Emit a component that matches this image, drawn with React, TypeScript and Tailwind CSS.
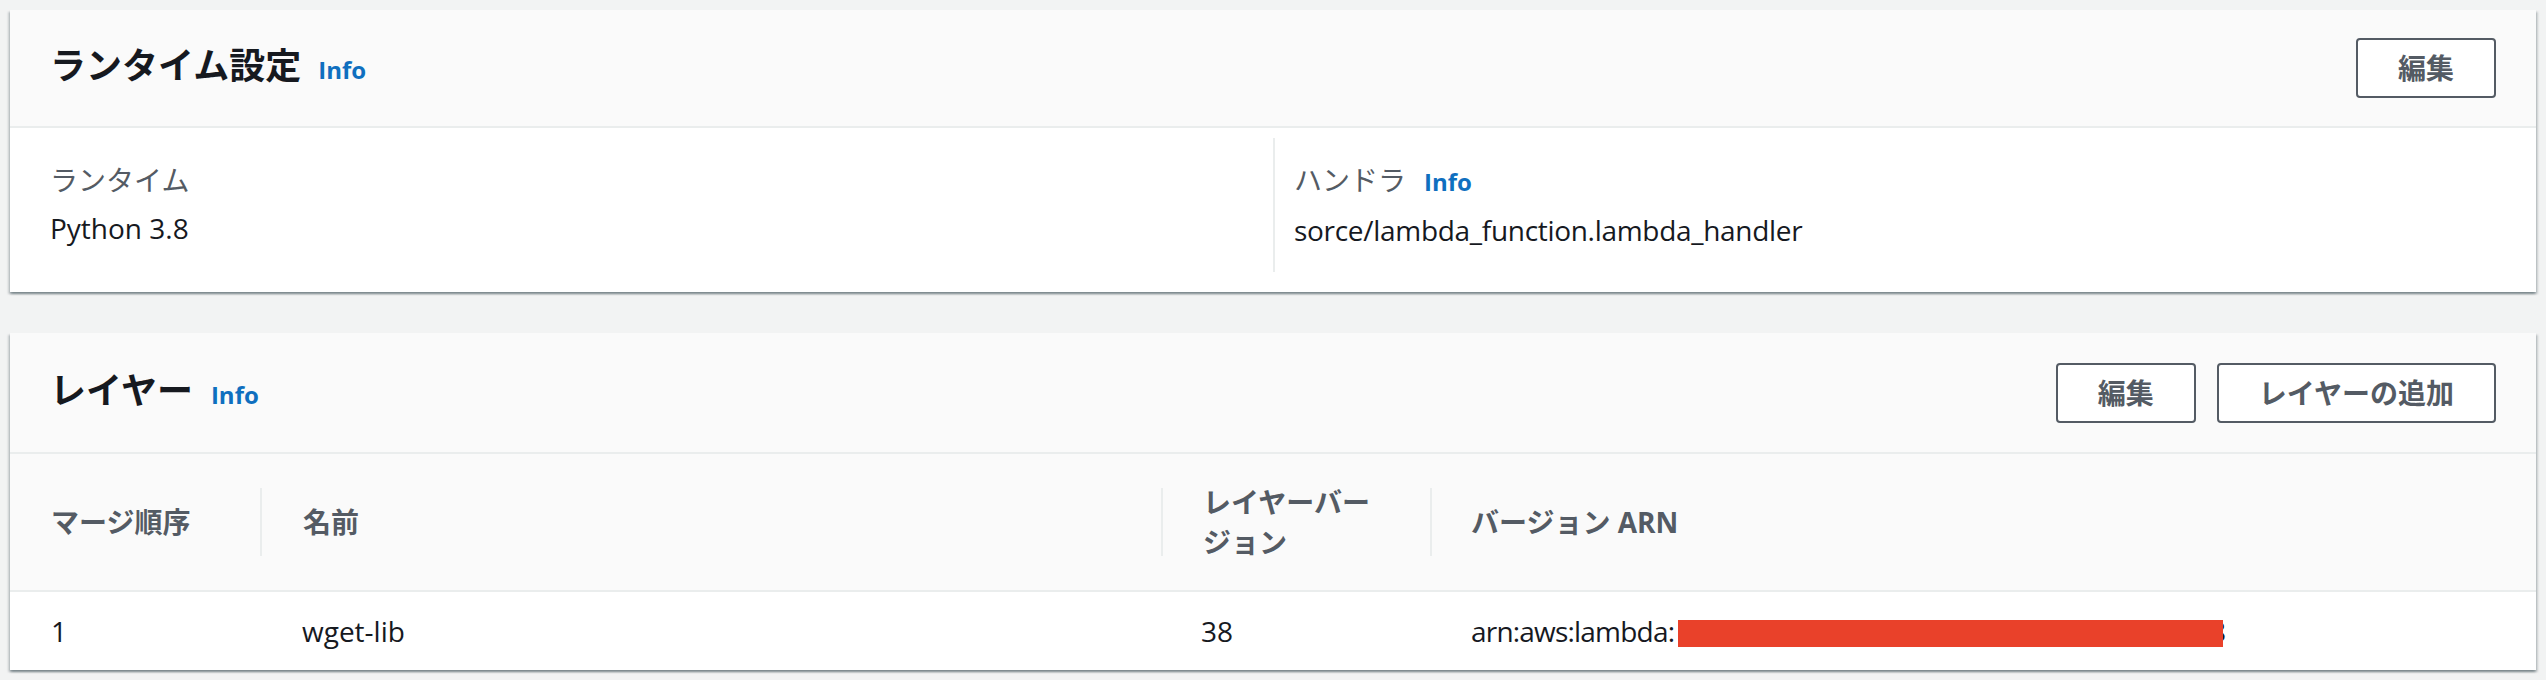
// Lambda console: runtime settings + layers panels
const font = "font-['Open_Sans','Noto_Sans_CJK_JP',sans-serif]";

const cardShadow =
  "shadow-[0_2px_2px_0_rgba(0,28,36,0.3),2px_2px_2px_0_rgba(0,28,36,0.15),-2px_2px_2px_0_rgba(0,28,36,0.15)]";

function Info({ className = "" }: { className?: string }) {
  return (
    <a href="#" className={`text-[24px] font-bold text-[#0f6fbf] no-underline ${className}`}>
      Info
    </a>
  );
}

function Button({ children }: { children: React.ReactNode }) {
  return (
    <button className="h-[60px] px-10 bg-white border-2 border-[#545b64] rounded-[4px] text-[28px] font-bold text-[#545b64] leading-none">
      {children}
    </button>
  );
}

function HeadCell({ children, sep, pad }: { children: React.ReactNode; sep: boolean; pad: string }) {
  return (
    <div className="flex items-center h-full">
      {sep && <div className="w-[2px] h-[68px] bg-[#eaeded] shrink-0" />}
      <div className={`${pad} pr-10 font-bold text-[28px] leading-[40px] text-[#545b64]`}>{children}</div>
    </div>
  );
}

export default function App() {
  return (
    <div className={`w-[2546px] h-[680px] overflow-hidden bg-[#f2f3f3] px-[10px] pt-[10px] ${font}`}>
      {/* runtime settings */}
      <section className={`bg-white ${cardShadow}`}>
        <div className="h-[118px] bg-[#fafafa] border-b-2 border-[#eaeded] px-10 flex items-center justify-between">
          <div className="flex items-baseline">
            <h2 className="text-[36px] font-bold text-[#16191f] leading-none">ランタイム設定</h2>
            <Info className="ml-[17px]" />
          </div>
          <Button>編集</Button>
        </div>
        <div className="grid grid-cols-2 px-10 pt-[10px] pb-5">
          <div className="py-5">
            <div className="text-[28px] leading-[44px] text-[#545b64] mb-1">ランタイム</div>
            <div className="text-[28px] leading-[44px] text-[#16191f]">Python 3.8</div>
          </div>
          <div className="py-5 pl-[19px] border-l-2 border-[#eaeded]">
            <div className="flex items-baseline text-[28px] leading-[44px] text-[#545b64] mb-1">
              ハンドラ
              <Info className="ml-[18px]" />
            </div>
            <div className="text-[28px] leading-[44px] text-[#16191f] tracking-[-0.3px]">
              sorce/lambda_function.lambda_handler
            </div>
          </div>
        </div>
      </section>

      {/* layers */}
      <section className={`mt-[41px] bg-white ${cardShadow}`}>
        <div className="h-[121px] bg-[#fafafa] border-b-2 border-[#eaeded] px-10 flex items-center justify-between">
          <div className="flex items-baseline">
            <h2 className="text-[36px] font-bold text-[#16191f] leading-none">レイヤー</h2>
            <Info className="ml-[18px]" />
          </div>
          <div className="flex gap-[21px]">
            <Button>編集</Button>
            <Button>レイヤーの追加</Button>
          </div>
        </div>

        <div className="grid grid-cols-[250px_901px_269px_1fr] h-[138px] bg-[#fafafa] border-b-2 border-[#eaeded]">
          <HeadCell sep={false} pad="pl-[41px]">マージ順序</HeadCell>
          <HeadCell sep pad="pl-[41px]">名前</HeadCell>
          <HeadCell sep pad="pl-10">レイヤーバージョン</HeadCell>
          <HeadCell sep pad="pl-[39px]">バージョン ARN</HeadCell>
        </div>

        <div className="grid grid-cols-[250px_901px_269px_1fr] h-[78px] items-center text-[28px] leading-[44px] text-[#16191f]">
          <div className="pl-[41px]">1</div>
          <div className="pl-[42px]">wget-lib</div>
          <div className="pl-10">38</div>
          <div className="pl-[41px] flex items-center">
            <span className="w-[207px] shrink-0 whitespace-nowrap tracking-[-0.8px]">arn:aws:lambda:</span>
            <span className="relative z-10 inline-block shrink-0 w-[545px] h-[27px] mt-[4px] bg-[#e9412a]" />
            <span className="-ml-[13px]">8</span>
          </div>
        </div>
      </section>
    </div>
  );
}
